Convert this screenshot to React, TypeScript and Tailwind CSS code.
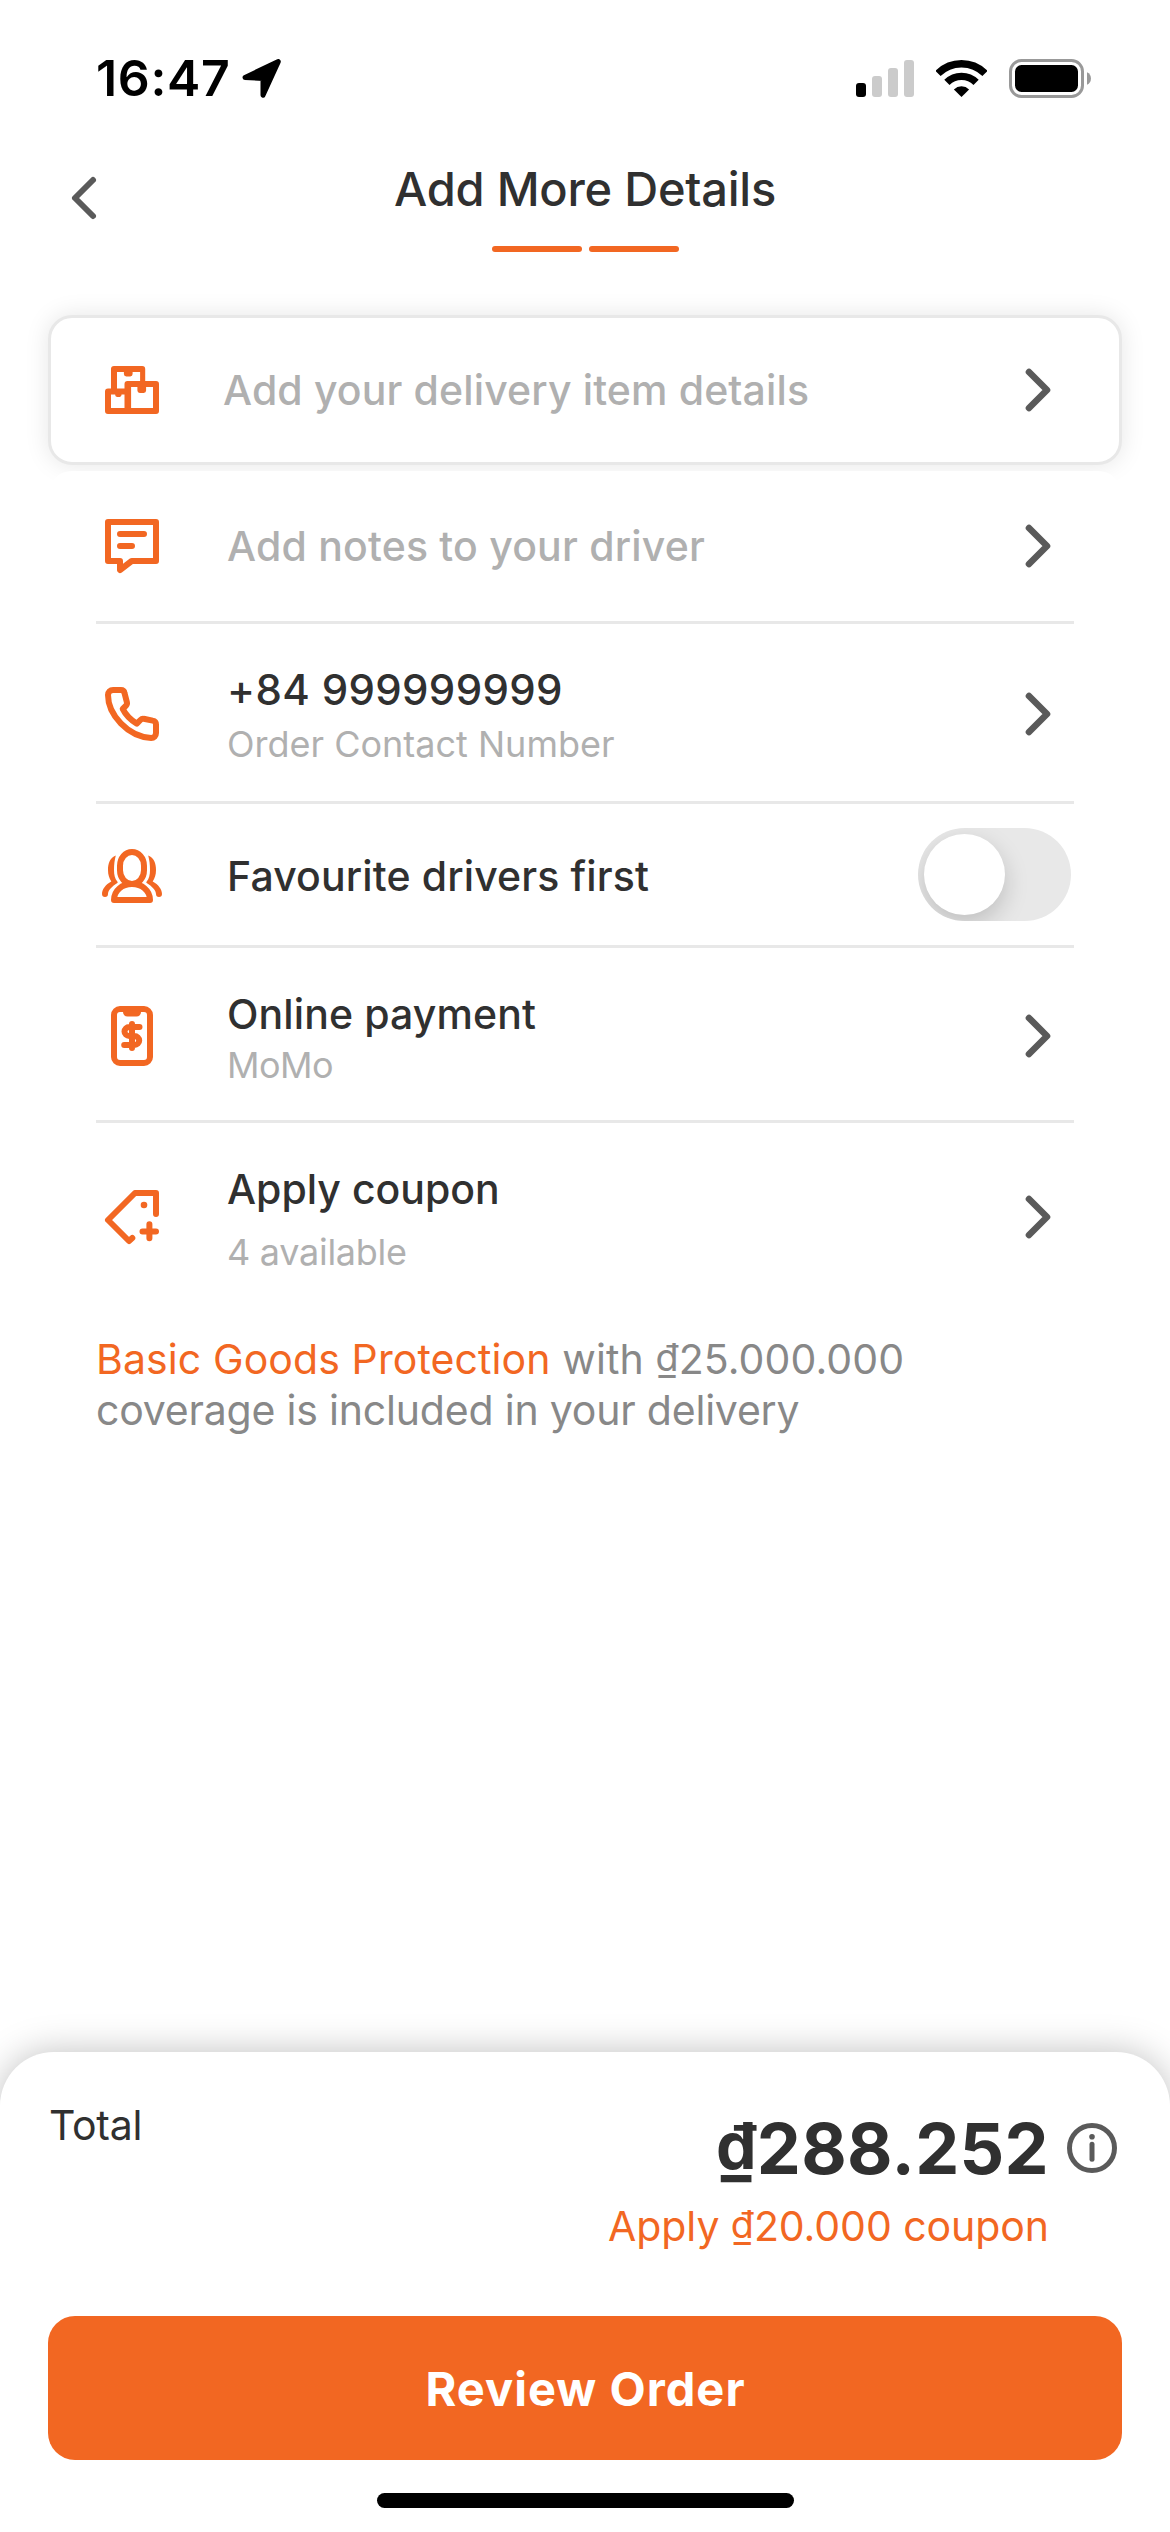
import { useState } from 'react'
import type { ReactNode } from 'react'
import { ChevronLeft, ChevronRight } from 'lucide-react'
import clsx from 'clsx'

function StatusBar() {
  return (
    <div className="flex h-[156px] items-center justify-between pr-[79px] pl-24 text-black">
      <div className="flex items-center">
        <span className="text-[50px] leading-none font-semibold tracking-[0.66px]">16:47</span>
        <svg width="39" height="39" viewBox="0 0 39 39" className="ml-3">
          <path
            d="M3 18.4 36.3 2.6 21 36.2V19.4Z"
            fill="currentColor"
            stroke="currentColor"
            strokeWidth="5"
            strokeLinejoin="round"
          />
        </svg>
      </div>
      <div className="flex items-center">
        <svg width="58" height="37" viewBox="0 0 58 37">
          <rect x="0" y="23" width="10" height="14" rx="3" fill="#000" />
          <rect x="16" y="16" width="10" height="21" rx="3" fill="#cbcbcb" />
          <rect x="32" y="8" width="10" height="29" rx="3" fill="#cbcbcb" />
          <rect x="48" y="0" width="10" height="37" rx="3" fill="#cbcbcb" />
        </svg>
        <svg width="51" height="37" viewBox="0 0 51 37" className="ml-[22px]">
          <g fill="none" stroke="#000" strokeWidth="7.4">
            <path d="M2 13.5a33.2 33.2 0 0 1 47 0" />
            <path d="M10.9 22.4a20.7 20.7 0 0 1 29.2 0" />
          </g>
          <path d="M25.5 37 17.9 29.4a10.9 10.9 0 0 1 15.2 0Z" fill="#000" />
        </svg>
        <svg width="82" height="39" viewBox="0 0 82 39" className="ml-[22px]">
          <rect x="1.5" y="1.5" width="72" height="36" rx="11" fill="none" stroke="#999" strokeWidth="3" />
          <rect x="6" y="6" width="63" height="27" rx="6.5" fill="#000" />
          <path d="M78 13.2a7 7 0 0 1 0 12.6Z" fill="#999" />
        </svg>
      </div>
    </div>
  )
}

function Header() {
  return (
    <header className="flex items-start px-12">
      <button className="mt-[6px] text-[#5a5a5a]">
        <ChevronLeft size={72} />
      </button>
      <div className="flex flex-1 flex-col items-center">
        <h1 className="text-[47px] leading-[66px] font-medium tracking-[-0.23px]">Add More Details</h1>
        <div className="mt-6 flex gap-[7px]">
          <span className="h-[6px] w-[90px] rounded-full bg-[#f26722]" />
          <span className="h-[6px] w-[90px] rounded-full bg-[#f26722]" />
        </div>
      </div>
      <div className="w-[72px]" />
    </header>
  )
}

function Icon({ children }: { children: ReactNode }) {
  return (
    <svg
      width="72"
      height="72"
      viewBox="0 0 24 24"
      fill="none"
      stroke="#f26722"
      strokeWidth="2"
      strokeLinecap="round"
      strokeLinejoin="round"
      className="shrink-0"
    >
      {children}
    </svg>
  )
}

function BoxesIcon() {
  return (
    <Icon>
      <path
        fill="#f26722"
        stroke="none"
        fillRule="evenodd"
        d="M6 4h9.4a1 1 0 0 1 1 1v4H20a1 1 0 0 1 1 1v9a1 1 0 0 1-1 1H4a1 1 0 0 1-1-1v-6.5a1 1 0 0 1 1-1h1V5a1 1 0 0 1 1-1ZM7 6v5.5h2.5V10a1 1 0 0 1 1-1h4.2V6h-2.5v.7a.8.8 0 0 1-.8.8h-1.3a.8.8 0 0 1-.8-.8V6ZM11.7 11v7H19v-7h-2.3v1.2a.8.8 0 0 1-.8.8h-1.3a.8.8 0 0 1-.8-.8V11ZM5 13.5V18h4.5v-4.5h-1v.2a.6.6 0 0 1-.6.6H7a.6.6 0 0 1-.6-.6v-.2Z"
      />
    </Icon>
  )
}

function NoteIcon() {
  return (
    <Icon>
      <path d="M4 4h16v13h-8.1L8 20v-3H4Z" />
      <path d="M8 8h8M8 12h4" />
    </Icon>
  )
}

function PhoneIcon() {
  return (
    <Icon>
      <path d="M5.7 4h2.6c.7 0 1.1.4 1.2 1l.8 3.1c.1.4 0 .8-.3 1.1L8.9 10.3c1 2 2.5 3.6 4.7 4.9l1.2-1.2c.3-.3.7-.5 1.1-.4l3 .6c.6.1 1.1.6 1.1 1.3v2.8c0 1-.7 1.7-1.6 1.7C10.6 19.6 4 12.2 4 5.7 4 4.7 4.7 4 5.7 4Z" />
    </Icon>
  )
}

const sidePerson =
  'M6.6 5.2C4.7 5.9 4 7.8 4 10c0 1.6.4 2.8 1.1 3.8C3.2 14.8 2 16.4 2 18a1 1 0 0 0 2 0c.1-1.4 1.2-2.4 3-3.6.3-.2.3-.4.1-.6C6.3 12.9 6 11.6 6 10c0-1.8.2-3.3.6-4.8Z'

function DriversIcon() {
  return (
    <Icon>
      <rect x="8" y="4" width="8" height="10.7" rx="4" ry="4.6" />
      <path d="M6 20h12c0-3.2-2.7-5.3-6-5.3S6 16.8 6 20Z" />
      <path d={sidePerson} fill="#f26722" stroke="none" />
      <path d={sidePerson} fill="#f26722" stroke="none" transform="translate(24) scale(-1 1)" />
    </Icon>
  )
}

function PaymentIcon() {
  return (
    <Icon>
      <rect x="6" y="3" width="12" height="18" rx="2" />
      <path d="M9 3.5h6V4c0 .9-.6 1.5-1.5 1.5h-3C9.600 5.5 9 4.9 9 4Z" fill="#f26722" stroke="none" />
      <path d="M14.5 9h-3.400a1.6 1.5 0 0 0 0 3h1.7a1.6 1.5 0 0 1 0 3H9.4M12 8v8" />
    </Icon>
  )
}

function CouponIcon() {
  return (
    <Icon>
      <path d="M20 11V4h-7l-9 9 7 7 1.1-1" />
      <path d="M15.5 16.8H20M17.8 14.4v4.7" />
      <circle cx="16" cy="8" r="1.1" fill="#f26722" stroke="none" />
    </Icon>
  )
}

function Chevron() {
  return <ChevronRight size={72} strokeWidth={2.2} className="shrink-0 text-[#5a5a5a]" />
}

// smaller and raised, so the bar under the sign rests on the baseline
function Dong() {
  return <span className="align-[0.08em] text-[0.92em] leading-none">₫</span>
}

function Switch({ on, onChange }: { on: boolean; onChange: () => void }) {
  return (
    <button
      role="switch"
      aria-checked={on}
      onClick={onChange}
      className={clsx(
        'mr-[3px] flex h-[93px] w-[153px] items-center overflow-hidden rounded-full p-[6px]',
        on ? 'justify-end bg-[#f26722]' : 'bg-[#e8e8e8]'
      )}
    >
      <span className="size-[81px] rounded-full bg-white shadow-[0_9px_24px_rgba(0,0,0,0.18)]" />
    </button>
  )
}

export default function App() {
  const [favouriteFirst, setFavouriteFirst] = useState(false)

  return (
    <div className="flex h-[2532px] w-[1170px] flex-col overflow-hidden bg-white font-['Inter',sans-serif] text-[#303030]">
      <StatusBar />
      <Header />

      <main className="mt-[63px] flex-1 px-12">
        <div className="flex h-[150px] items-center rounded-3xl border-[3px] border-[#e8e8e8] bg-white px-[45px] shadow-[0_0_24px_rgba(0,0,0,0.1)]">
          <BoxesIcon />
          <span className="ml-[55px] flex-1 text-[41px] leading-none font-medium tracking-[0.13px] text-[#b0b0b0]">
            Add your delivery item details
          </span>
          <Chevron />
        </div>

        <div className="relative mt-[6px] rounded-t-3xl bg-white px-12">
          <div className="flex h-[153px] items-center border-b-[3px] border-[#e8e8e8]">
            <NoteIcon />
            <span className="ml-[59px] flex-1 text-[41px] leading-none font-medium tracking-[0.19px] text-[#b0b0b0]">
              Add notes to your driver
            </span>
            <Chevron />
          </div>

          <div className="flex h-[180px] items-center border-b-[3px] border-[#e8e8e8] pt-[3px]">
            <PhoneIcon />
            <div className="ml-[59px] flex-1">
              <p className="text-[42px] leading-[60px] font-medium tracking-[0.35px]">+84 999999999</p>
              <p className="text-4xl leading-[48px] text-[#b0b0b0]">Order Contact Number</p>
            </div>
            <Chevron />
          </div>

          <div className="flex h-36 items-center justify-between border-b-[3px] border-[#e8e8e8]">
            <div className="flex items-center pt-[3px]">
              <DriversIcon />
              <span className="ml-[59px] text-[41px] leading-[48px] font-medium tracking-[0.13px]">
                Favourite drivers first
              </span>
            </div>
            <Switch on={favouriteFirst} onChange={() => setFavouriteFirst(!favouriteFirst)} />
          </div>

          <div className="flex h-[175px] items-center border-b-[3px] border-[#e8e8e8] pt-[3px]">
            <PaymentIcon />
            <div className="ml-[59px] flex-1 pt-[10px]">
              <p className="text-[41px] leading-[48px] font-medium tracking-[0.11px]">Online payment</p>
              <p className="text-4xl leading-[54px] tracking-[-0.54px] text-[#b0b0b0]">MoMo</p>
            </div>
            <Chevron />
          </div>

          <div className="flex h-[188px] items-center">
            <CouponIcon />
            <div className="ml-[59px] flex-1 pt-[7px]">
              <p className="text-[41px] leading-[63px] font-medium">Apply coupon</p>
              <p className="text-4xl leading-[63px] tracking-[-0.28px] text-[#b0b0b0]">4 available</p>
            </div>
            <Chevron />
          </div>

          <p className="mt-[23px] text-[41px] leading-[51px] tracking-[0.1px] text-[#888]">
            <span className="text-[#f26722]">Basic Goods Protection</span> with <Dong />
            25.000.000
            <br />
            <span className="tracking-[-0.2px]">coverage is included in your delivery</span>
          </p>
        </div>
      </main>

      <section className="flex h-[480px] flex-col rounded-t-[54px] bg-white px-12 shadow-[0_0_36px_rgba(0,0,0,0.25)]">
        <div className="flex h-[264px] items-start justify-between">
          <span className="mt-[47px] ml-px text-[41px] leading-[52px] tracking-[-0.25px]">Total</span>
          <div className="mt-[56px] flex items-start">
            <div className="text-right">
              <p className="text-[70px] leading-[81px] font-bold tracking-[0.3px]">
                <Dong />
                288.252
              </p>
              <p className="mt-3 text-[41px] leading-[51px] tracking-[-0.06px] text-[#f26722]">
                Apply <Dong />
                20.000 coupon
              </p>
            </div>
            <svg width="50" height="50" viewBox="0 0 50 50" className="mt-[15px] mr-[5px] ml-[18px]" stroke="#5a5a5a">
              <circle cx="25" cy="25" r="22.5" fill="none" strokeWidth="5" />
              <circle cx="25" cy="13.7" r="2.8" fill="#5a5a5a" stroke="none" />
              <path d="M25 21.2v15" strokeWidth="5" strokeLinecap="round" />
            </svg>
          </div>
        </div>
        <button className="h-36 shrink-0 rounded-[27px] bg-[#f26722] pl-px text-[47px] leading-none font-bold tracking-[1.03px] text-white">
          Review Order
        </button>
        <div className="mx-auto mt-[33px] h-[15px] w-[417px] rounded-full bg-black" />
      </section>
    </div>
  )
}
